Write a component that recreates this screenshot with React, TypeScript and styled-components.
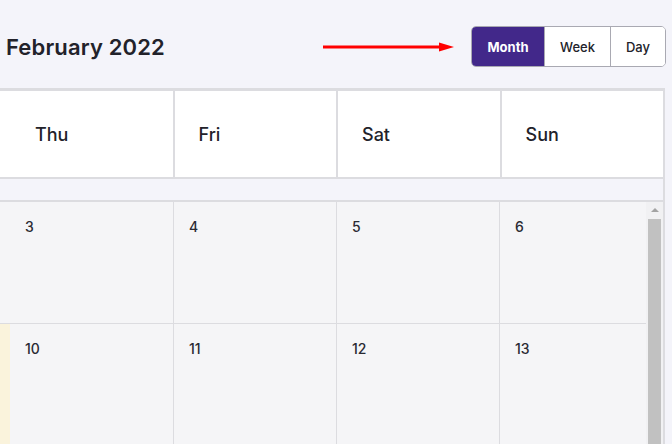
import React from "react";
import styled, { createGlobalStyle } from "styled-components";

const GlobalStyle = createGlobalStyle`
  html, body { margin: 0; padding: 0; background: #f4f4fa; }
  body { font-family: Inter, "Noto Sans", Arial, sans-serif; color: #222228; overflow: hidden; }
  * { box-sizing: border-box; }
`;

const Page = styled.div`
  width: 672px;
  height: 444px;
  overflow: hidden;
  background: #f4f4fa;
`;

const Toolbar = styled.header`
  height: 88px;
  padding: 5px 6px 0 6px;
  display: flex;
  align-items: center;
`;

const Title = styled.h1`
  margin: 0;
  font-size: 22px;
  font-weight: 600;
  color: #22222a;
  letter-spacing: 0.15px;
`;

const ArrowWrap = styled.div`
  margin-left: auto;
  margin-right: 17px;
  width: 131px;
  height: 12px;
  display: flex;
`;

const ButtonGroup = styled.div`
  display: flex;
  height: 41px;
  border: 1px solid #a9a9b2;
  border-radius: 5px;
  overflow: hidden;
  background: #ffffff;
`;

const ViewButton = styled.button<{ $active?: boolean; $w: number }>`
  width: ${(p) => p.$w}px;
  height: 100%;
  border: none;
  border-left: 1px solid #a9a9b2;
  &:first-child { border-left: none; }
  padding: 0;
  font-family: Inter, "Noto Sans", Arial, sans-serif;
  font-size: 13px;
  font-weight: ${(p) => (p.$active ? 700 : 500)};
  color: ${(p) => (p.$active ? "#ffffff" : "#22222a")};
  background: ${(p) => (p.$active ? "#42288a" : "#ffffff")};
`;

const Calendar = styled.section`
  width: 665px;
  border-top: 3px solid #dcdce0;
  border-right: 2px solid #dcdce0;
  display: flex;
  flex-direction: column;
`;

const HeaderRow = styled.div`
  display: grid;
  grid-template-columns: 9px repeat(4, 1fr);
  column-gap: 2px;
  background: #dcdce0;
  height: 86px;
`;

const HeaderCell = styled.div`
  background: #ffffff;
  display: flex;
  align-items: center;
  padding-left: 24px;
  font-size: 18px;
  font-weight: 500;
  color: #22222a;
  overflow: hidden;
`;

const Strip = styled.div`
  height: 21px;
  border-top: 2px solid #dcdce0;
  box-sizing: content-box;
  background: #f4f4fa;
`;

const Body = styled.div`
  border-top: 2px solid #dcdce0;
  display: flex;
  height: 250px;
`;

const Viewport = styled.div`
  flex: 1;
  overflow: hidden;
`;

const MonthGrid = styled.div`
  display: grid;
  grid-template-columns: 9px 163px 162px 162px 163px;
  grid-auto-rows: 121px;
  gap: 1px;
  background: #dcdce0;
  width: 663px;
`;

const DayCell = styled.div<{ $today?: boolean }>`
  background: ${(p) => (p.$today ? "#faf3dc" : "#f5f5f7")};
  padding: 16px 0 0 15px;
  font-size: 14px;
  font-weight: 500;
  color: #2a2a33;
  overflow: hidden;
`;

const Scrollbar = styled.div`
  width: 17px;
  background: #f1f1f3;
  display: flex;
  flex-direction: column;
  align-items: center;
  padding-top: 6px;
`;

const ScrollArrow = styled.div`
  width: 0;
  height: 0;
  border-left: 4px solid transparent;
  border-right: 4px solid transparent;
  border-bottom: 4px solid #a3a3a3;
`;

const Thumb = styled.div`
  margin-top: 7px;
  width: 13px;
  flex: 1;
  background: #c1c1c1;
`;

const headerDays = ["Wed", "Thu", "Fri", "Sat", "Sun"];
const rows = [
  ["2", "3", "4", "5", "6"],
  ["9", "10", "11", "12", "13"],
];

export default function App() {
  return (
    <Page>
      <GlobalStyle />
      <Toolbar>
        <Title>February 2022</Title>
        <ArrowWrap>
          <svg width="131" height="12" viewBox="0 0 131 12">
            <rect x="0" y="4.5" width="118" height="3" fill="#ff0000" />
            <polygon points="116,1.5 131,6 116,10.5" fill="#ff0000" />
          </svg>
        </ArrowWrap>
        <ButtonGroup>
          <ViewButton $active $w={72}>Month</ViewButton>
          <ViewButton $w={66}>Week</ViewButton>
          <ViewButton $w={55}>Day</ViewButton>
        </ButtonGroup>
      </Toolbar>
      <Calendar>
        <HeaderRow>
          {headerDays.map((d, i) => (
            <HeaderCell key={d}>{i === 0 ? "" : d}</HeaderCell>
          ))}
        </HeaderRow>
        <Strip />
        <Body>
          <Viewport>
            <MonthGrid>
              {rows.map((r, ri) =>
                r.map((d, ci) => (
                  <DayCell key={`${ri}-${ci}`} $today={ri === 1 && ci === 0}>
                    {ci === 0 ? "" : d}
                  </DayCell>
                ))
              )}
            </MonthGrid>
          </Viewport>
          <Scrollbar>
            <ScrollArrow />
            <Thumb />
          </Scrollbar>
        </Body>
      </Calendar>
    </Page>
  );
}
